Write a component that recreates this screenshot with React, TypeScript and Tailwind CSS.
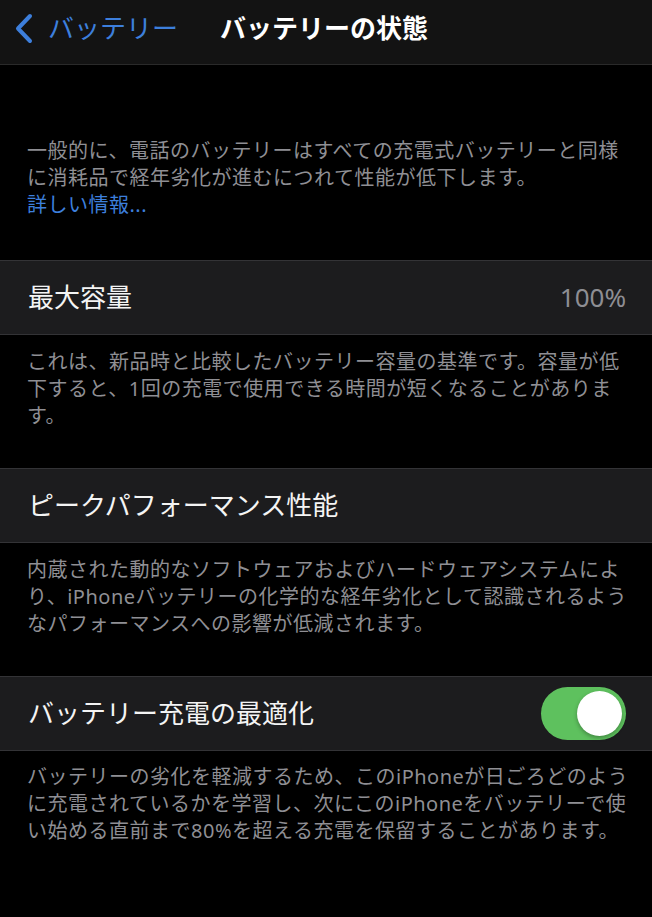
import React from 'react';

const Note: React.FC<{ lines: string[]; link?: string; className?: string }> = ({ lines, link, className = '' }) => (
  <div className={`px-[27px] text-[20px] leading-[27px] tracking-[0.5px] text-[#8f8f94] ${className}`}>
    {lines.map((l) => (
      <div key={l} className="whitespace-nowrap">{l}</div>
    ))}
    {link && <div className="whitespace-nowrap text-[#3d7fdc]">{link}</div>}
  </div>
);

const Row: React.FC<{ label: string; children?: React.ReactNode }> = ({ label, children }) => (
  <div className="h-[75px] bg-[#1c1c1e] border-y border-[#333336] flex items-center justify-between pl-[28px] pr-[26px]">
    <span className="text-[26px] text-[#f4f4f4] whitespace-nowrap">{label}</span>
    {children}
  </div>
);

const Toggle: React.FC = () => (
  <div className="w-[85px] h-[53px] rounded-full bg-[#5ec15e] flex items-center justify-end p-[4px]">
    <div className="w-[45px] h-[45px] rounded-full bg-white shadow-[0_2px_4px_rgba(0,0,0,0.3)]" />
  </div>
);

export default function App() {
  return (
    <div className="min-h-screen bg-black font-['Noto_Sans','Noto_Sans_CJK_JP',sans-serif]">
      <div className="h-[65px] bg-[#131313] border-b border-[#2a2a2a] flex items-center pb-[8px] pl-[14px]">
        <svg width="20" height="31" viewBox="0 0 20 31" className="shrink-0">
          <polyline points="16,3 4,15.5 16,28" fill="none" stroke="#3d7fdc" strokeWidth="4" strokeLinecap="round" strokeLinejoin="round" />
        </svg>
        <span className="ml-[14px] text-[26px] text-[#3d7fdc] whitespace-nowrap">バッテリー</span>
        <span className="ml-[42px] text-[26px] font-semibold text-white whitespace-nowrap">バッテリーの状態</span>
      </div>

      <Note
        className="pt-[72px] pb-[42px]"
        lines={['一般的に、電話のバッテリーはすべての充電式バッテリーと同様', 'に消耗品で経年劣化が進むにつれて性能が低下します。']}
        link="詳しい情報..."
      />

      <Row label="最大容量">
        <span className="text-[26px] text-[#8e8e93]">100%</span>
      </Row>
      <Note
        className="pt-[13px] pb-[39px]"
        lines={[
          'これは、新品時と比較したバッテリー容量の基準です。容量が低',
          '下すると、1回の充電で使用できる時間が短くなることがありま',
          'す。',
        ]}
      />

      <Row label="ピークパフォーマンス性能" />
      <Note
        className="pt-[13px] pb-[39px]"
        lines={[
          '内蔵された動的なソフトウェアおよびハードウェアシステムによ',
          'り、iPhoneバッテリーの化学的な経年劣化として認識されるよう',
          'なパフォーマンスへの影響が低減されます。',
        ]}
      />

      <Row label="バッテリー充電の最適化">
        <Toggle />
      </Row>
      <Note
        className="pt-[12px] pb-[40px]"
        lines={[
          'バッテリーの劣化を軽減するため、このiPhoneが日ごろどのよう',
          'に充電されているかを学習し、次にこのiPhoneをバッテリーで使',
          'い始める直前まで80%を超える充電を保留することがあります。',
        ]}
      />
    </div>
  );
}
